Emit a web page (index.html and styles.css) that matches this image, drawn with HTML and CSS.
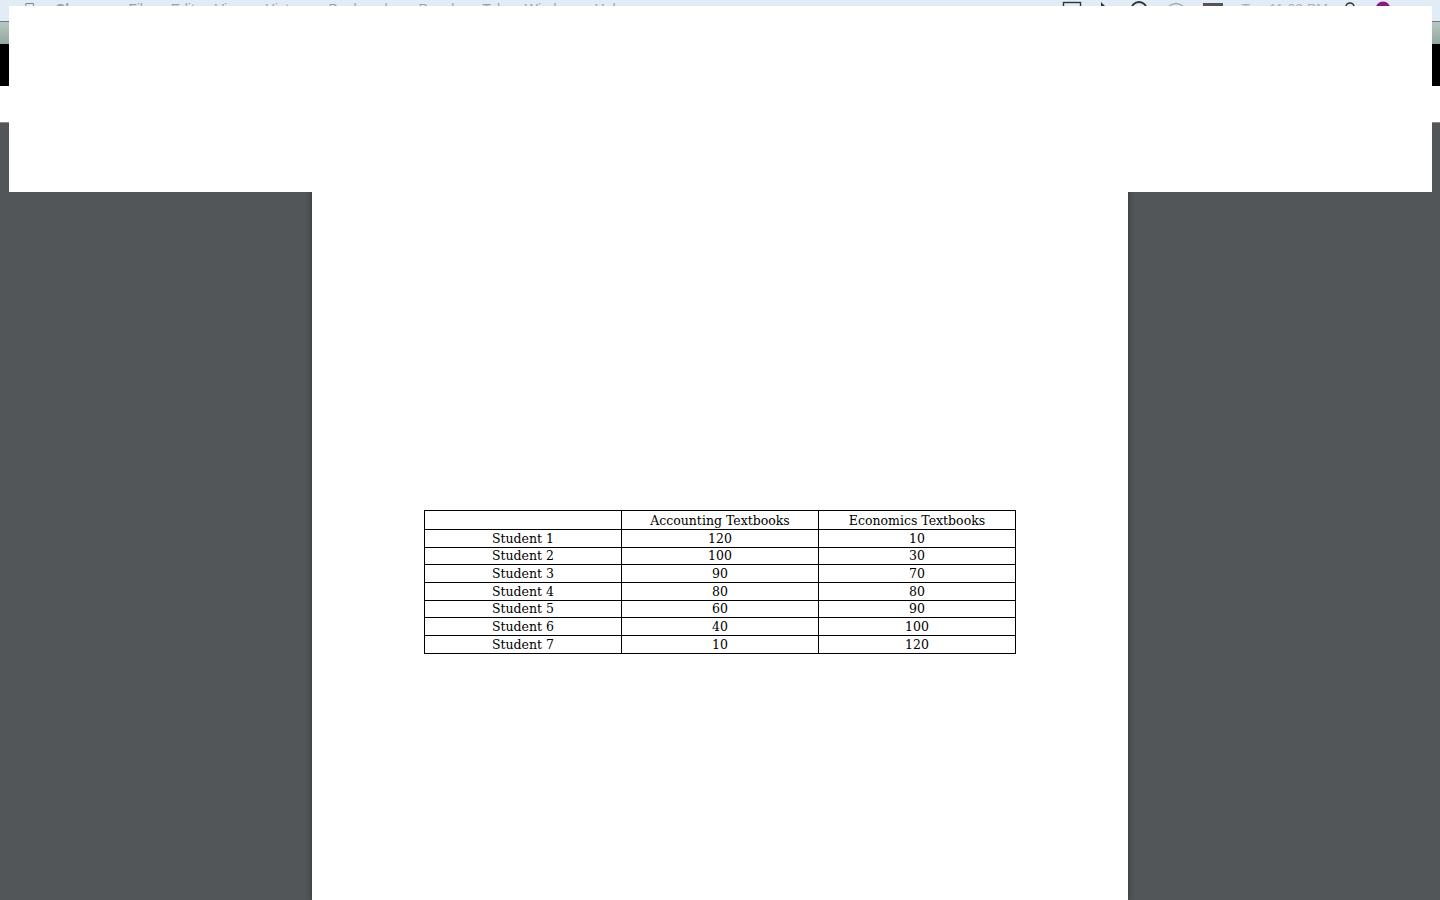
FILE: index.html
```html
<!DOCTYPE html>
<html>
<head>
<meta charset="utf-8">
<title>PDF</title>
<link rel="stylesheet" href="styles.css">
</head>
<body>
<div class="menubar">
  <div class="menu-left">
    <span class="apple">&#63743;</span>
    <span class="mi bold">Chrome</span>
    <span class="mi">File</span>
    <span class="mi">Edit</span>
    <span class="mi">View</span>
    <span class="mi">History</span>
    <span class="mi">Bookmarks</span>
    <span class="mi">People</span>
    <span class="mi">Tab</span>
    <span class="mi">Window</span>
    <span class="mi">Help</span>
  </div>
  <div class="menu-right">
    <svg class="ic" width="20" height="16" viewBox="0 0 20 16"><rect x="1.5" y="1.5" width="17" height="13" fill="none" stroke="#333" stroke-width="1.4"/></svg>
    <svg class="ic" width="14" height="16" viewBox="0 0 14 16"><path d="M3 1 L3 14 L6 11 L9 16 L11 15 L8 10 L12 10 Z" fill="#333"/></svg>
    <svg class="ic" width="22" height="16" viewBox="0 0 22 16"><circle cx="11" cy="9" r="8" fill="none" stroke="#333" stroke-width="2"/></svg>
    <svg class="ic" width="20" height="16" viewBox="0 0 20 16"><path d="M2 6 Q10 -1 18 6 M5 9 Q10 4 15 9" fill="none" stroke="#aaa" stroke-width="1.6"/></svg>
    <svg class="ic" width="24" height="16" viewBox="0 0 24 16"><rect x="1" y="2" width="20" height="10" fill="#555"/><rect x="21" y="5" width="2" height="4" fill="#555"/></svg>
    <span class="clock">Tue 11:02 PM</span>
    <svg class="ic" width="14" height="16" viewBox="0 0 14 16"><circle cx="6" cy="6" r="4" fill="none" stroke="#333" stroke-width="1.6"/><path d="M9 9 L13 13" stroke="#333" stroke-width="1.8"/></svg>
    <svg class="ic" width="18" height="16" viewBox="0 0 18 16"><circle cx="9" cy="8" r="7.5" fill="#8a1a7a"/></svg>
  </div>
</div>
<div class="tabstrip"></div>
<div class="toolbar"></div>
<div class="whitebar"></div>
<div class="viewer">
  <div class="page">
    <table class="data">
      <tr class="head"><td></td><td>Accounting Textbooks</td><td>Economics Textbooks</td></tr>
      <tr><td>Student 1</td><td>120</td><td>10</td></tr>
      <tr><td>Student 2</td><td>100</td><td>30</td></tr>
      <tr><td>Student 3</td><td>90</td><td>70</td></tr>
      <tr><td>Student 4</td><td>80</td><td>80</td></tr>
      <tr><td>Student 5</td><td>60</td><td>90</td></tr>
      <tr><td>Student 6</td><td>40</td><td>100</td></tr>
      <tr><td>Student 7</td><td>10</td><td>120</td></tr>
    </table>
  </div>
</div>
<div class="overlay"></div>
</body>
</html>
```
FILE: styles.css
```css
html, body {
  margin: 0;
  padding: 0;
}
body {
  width: 1440px;
  height: 900px;
  overflow: hidden;
  background: #525659;
  font-family: "Liberation Sans", Arial, sans-serif;
  display: flex;
  flex-direction: column;
}
.menubar {
  height: 21px;
  flex: none;
  background: #e2ecf6;
  display: flex;
  justify-content: space-between;
  align-items: flex-start;
  font-size: 14px;
  color: #9aa3ad;
  overflow: hidden;
}
.menu-left {
  display: flex;
  gap: 20px;
  padding-left: 24px;
  padding-top: 1px;
  line-height: 16px;
}
.apple {
  color: #333;
  font-size: 15px;
}
.bold { font-weight: bold; }
.menu-right {
  display: flex;
  align-items: flex-start;
  gap: 16px;
  padding-right: 48px;
  padding-top: 1px;
}
.ic { display: block; }
.clock {
  color: #aab2bb;
  font-size: 14px;
  line-height: 16px;
}
.tabstrip {
  height: 22px;
  flex: none;
  border-top: 1px solid #6f7a84;
  background: linear-gradient(#b6c8bf, #94a79e);
}
.toolbar {
  height: 42px;
  flex: none;
  background: #000;
}
.whitebar {
  height: 36px;
  flex: none;
  background: #fff;
  border-bottom: 1px solid #8b8e91;
}
.viewer {
  flex: 1;
  display: flex;
  justify-content: center;
  min-height: 0;
}
.page {
  width: 816px;
  background: #fff;
  box-shadow: 0 0 6px rgba(0, 0, 0, 0.45);
  padding: 387px 0 0 112px;
  box-sizing: border-box;
}
.data {
  border-collapse: collapse;
  width: 592px;
  font-family: "DejaVu Serif", "Liberation Serif", serif;
  font-size: 12.5px;
  color: #000;
  table-layout: fixed;
}
.data td {
  border: 1px solid #000;
  height: 16.7px;
  padding: 0;
  line-height: 16px;
  text-align: center;
  vertical-align: bottom;
}
.data .head td {
  height: 18px;
}
.overlay {
  position: absolute;
  left: 9px;
  top: 6px;
  width: 1423px;
  height: 186px;
  background: #fff;
}
```
